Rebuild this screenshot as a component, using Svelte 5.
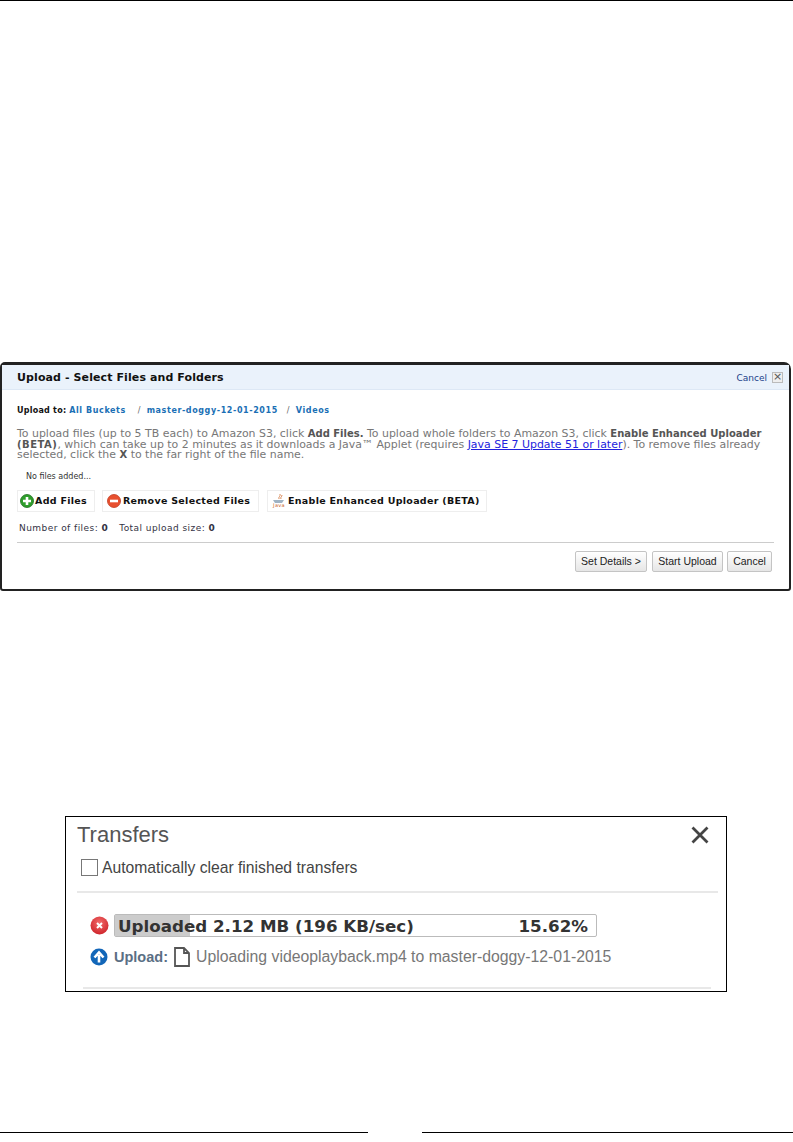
<script>
	const crumbs = ['master-doggy-12-01-2015', 'Videos'];
</script>

<div class="page">
	<div class="top-rule"></div>

	<section class="upload">
		<header class="upload__head">
			<h2>Upload - Select Files and Folders</h2>
			<span class="upload__cancel">Cancel</span>
			<span class="upload__x">×</span>
		</header>

		<div class="upload__body">
			<p class="crumbs">
				<b>Upload to:</b> <a href="#a">All Buckets</a>
				{#each crumbs as c}
					<span class="sep">/</span><a href="#a">{c}</a>
				{/each}
			</p>

			<p class="intro">
				To upload files (up to 5 TB each) to Amazon S3, click <b>Add Files.</b> To upload whole folders to Amazon S3, click <b>Enable Enhanced Uploader</b><br />
				<b class="beta">(BETA)</b>, which can take up to 2 minutes as it downloads a Java™ Applet (requires <a class="java" href="#a">Java SE 7 Update 51 or later</a>). To remove files already<br />
				selected, click the <b>X</b> to the far right of the file name.
			</p>

			<p class="none">No files added...</p>

			<div class="tools">
				<span class="tool tool--add">
					<svg width="14" height="14" viewBox="0 0 14 14">
						<circle cx="7" cy="7" r="6.5" fill="#2f9e2c" stroke="#1c6e1c" stroke-width="0.8" />
						<path d="M7 3v8M3 7h8" stroke="#fff" stroke-width="2.6" />
					</svg>
					Add Files
				</span>
				<span class="tool tool--remove">
					<svg width="14" height="14" viewBox="0 0 14 14">
						<circle cx="7" cy="7" r="6.5" fill="#e8502f" stroke="#c23a1f" stroke-width="0.8" />
						<path d="M3 7h8" stroke="#fff" stroke-width="2.6" />
					</svg>
					Remove Selected Files
				</span>
				<span class="tool tool--java">
					<span class="java-logo">
						<svg width="14" height="10" viewBox="0 0 14 10">
							<path d="M8 0c1 2-2 3-1 5M10 1c0 2-2 2-1 4" stroke="#d98a5a" fill="none" />
							<path d="M1 6h11l-2 3H3z" fill="#9fb3c4" />
						</svg>
						<span class="java-word">Java</span>
					</span>
					Enable Enhanced Uploader (BETA)
				</span>
			</div>

			<p class="counts">
				<span>Number of files: <b>0</b></span>
				<span>Total upload size: <b>0</b></span>
			</p>

			<div class="upload__foot">
				<button>Set Details &gt;</button>
				<button>Start Upload</button>
				<button>Cancel</button>
			</div>
		</div>
	</section>

	<section class="transfers">
		<header class="transfers__head">
			<h2>Transfers</h2>
			<svg width="18" height="18" viewBox="0 0 18 18">
				<path d="M1.5 1.5l15 15M16.5 1.5l-15 15" stroke="#444" stroke-width="2.8" />
			</svg>
		</header>

		<div class="auto">
			<span class="check"></span>
			Automatically clear finished transfers
		</div>

		<div class="transfers__row">
			<svg width="19" height="19" viewBox="0 0 19 19">
				<defs>
					<radialGradient id="red" cx="50%" cy="35%" r="70%">
						<stop offset="0" stop-color="#f26a6a" />
						<stop offset="1" stop-color="#cc2027" />
					</radialGradient>
				</defs>
				<circle cx="9.5" cy="9.5" r="9" fill="url(#red)" />
				<path d="M7 7l5 5M12 7l-5 5" stroke="#fff" stroke-width="2" />
			</svg>
			<div class="bar">
				<div class="bar__fill" style="width: {15.62}%"></div>
				<span class="bar__text">Uploaded 2.12 MB (196 KB/sec)</span>
				<span class="bar__pct">15.62%</span>
			</div>
		</div>

		<div class="transfers__file">
			<svg width="18" height="18" viewBox="0 0 18 18">
				<circle cx="9" cy="9" r="8.5" fill="#1266b8" />
				<path d="M9 14.5V7M4.5 9.5L9 4.5l4.5 5" stroke="#fff" stroke-width="2.6" fill="none" />
			</svg>
			<b>Upload:</b>
			<svg class="doc" width="16" height="20" viewBox="0 0 16 20">
				<path d="M1 1h9l5 5v13H1zM10 1v5h5" fill="#fff" stroke="#555" stroke-width="1.8" />
			</svg>
			<span>Uploading videoplayback.mp4 to master-doggy-12-01-2015</span>
		</div>

		<div class="transfers__end"></div>
	</section>

	<div class="bottom-rule">
		<span></span>
		<span></span>
	</div>
</div>

<style>
	:global(body) {
		margin: 0;
		background: #fff;
	}

	.page {
		height: 1142px;
		overflow: hidden;
		font-family: 'DejaVu Sans', sans-serif;
	}

	p,
	h2 {
		margin: 0;
	}

	.top-rule {
		height: 1px;
		background: #000;
	}

	/* captura de S3 */
	.upload {
		box-sizing: border-box;
		width: 791px;
		height: 229px;
		margin-top: 361px;
		border: solid #222;
		border-width: 3px 2px 2px 2px;
		border-radius: 5px 7px 3px 3px;
		background: #fff;
	}

	.upload__head {
		box-sizing: border-box;
		display: flex;
		align-items: center;
		height: 25px;
		padding: 1px 6px 0 15px;
		background: #eaf2fb;
		border-bottom: 1px solid #dde8f5;
	}

	.upload__head h2 {
		flex: 1;
		font-size: 11px;
		font-weight: 700;
		letter-spacing: 0.1px;
		color: #111;
	}

	.upload__cancel {
		font-size: 9px;
		color: #1b3f8a;
		margin-right: 5px;
	}

	.upload__x {
		box-sizing: border-box;
		width: 11px;
		height: 11px;
		line-height: 8px;
		font-size: 11px;
		text-align: center;
		color: #555;
		background: #eee;
		border: 1px solid #bbb;
	}

	.upload__body {
		padding: 0 15px;
	}

	.crumbs {
		margin-top: 15px;
		font-size: 8px;
		line-height: 11px;
		letter-spacing: 0.25px;
		color: #111;
	}

	.crumbs a {
		color: #1a6fb5;
		font-weight: 700;
		letter-spacing: 0.6px;
		text-decoration: none;
	}

	.sep {
		margin: 0 6px 0 9px;
		color: #666;
	}

	.intro {
		margin-top: 13px;
		font-size: 10.95px;
		line-height: 10.5px;
		color: #777;
		white-space: nowrap;
	}

	.intro b {
		font-size: 10px;
		color: #555;
	}

	.intro .beta {
		letter-spacing: 0.5px;
	}

	.java {
		color: #2222dd;
	}

	.none {
		margin: 10px 0 0 9px;
		font-size: 8px;
		line-height: 11px;
		color: #333;
	}

	.tools {
		display: flex;
		gap: 7px;
		margin-top: 8px;
	}

	.tool {
		box-sizing: border-box;
		display: flex;
		align-items: center;
		gap: 2px;
		height: 22px;
		padding: 0 2px;
		border: 1px solid #eee;
		font-size: 9.5px;
		font-weight: 700;
		letter-spacing: 0.3px;
		color: #111;
		white-space: nowrap;
	}

	.tool--add {
		width: 78px;
		gap: 1px;
	}

	.tool--remove {
		width: 157px;
		padding-left: 4px;
	}

	.tool--java {
		width: 220px;
		margin-left: 1px;
		padding-left: 4px;
	}

	.java-logo {
		display: flex;
		flex-direction: column;
		align-items: center;
		width: 14px;
	}

	.java-word {
		font-size: 5px;
		line-height: 5px;
		font-weight: 400;
		color: #c8632b;
		margin-top: -1px;
	}

	.counts {
		display: flex;
		gap: 11px;
		margin: 11px 0 0 2px;
		font-size: 9px;
		line-height: 11px;
		letter-spacing: 0.45px;
		color: #334;
	}

	.upload__foot {
		display: flex;
		justify-content: flex-end;
		gap: 4px;
		margin-top: 8px;
		padding: 8px 2px 0 0;
		border-top: 1px solid #ccc;
	}

	button {
		height: 21px;
		padding: 0;
		border: 1px solid #c4c4c4;
		border-radius: 2px;
		background: linear-gradient(#fff, #e6e6e6);
		font-family: 'Liberation Sans', sans-serif;
		font-size: 10.5px;
		color: #222;
	}

	button:nth-child(1) {
		width: 72px;
		margin-right: 1px;
	}

	button:nth-child(2) {
		width: 71px;
	}

	button:nth-child(3) {
		width: 45px;
	}

	/* captura de transferencias */
	.transfers {
		box-sizing: border-box;
		width: 662px;
		height: 176px;
		margin: 225px 0 0 65px;
		padding: 0 8px 0 11px;
		border: 1px solid #000;
		font-family: 'Liberation Sans', sans-serif;
	}

	.transfers__head {
		display: flex;
		justify-content: space-between;
		align-items: center;
		height: 34px;
		padding: 1px 9px 0 0;
	}

	.transfers__head h2 {
		font-size: 22px;
		font-weight: 400;
		color: #555;
	}

	.auto {
		display: flex;
		align-items: center;
		gap: 4px;
		height: 41px;
		padding: 0 0 8px 4px;
		box-sizing: border-box;
		border-bottom: 2px solid #e8e8e8;
		font-size: 15.7px;
		color: #444;
	}

	.check {
		box-sizing: border-box;
		width: 17px;
		height: 17px;
		border: 1px solid #777;
		background: #fff;
	}

	.transfers__row {
		display: flex;
		align-items: center;
		gap: 5px;
		margin: 21px 0 0 13px;
	}

	.bar {
		position: relative;
		box-sizing: border-box;
		display: flex;
		justify-content: space-between;
		align-items: center;
		width: 483px;
		height: 23px;
		padding: 0 8px 0 3px;
		border: 1px solid #bbb;
		border-radius: 2px;
		font-family: 'DejaVu Sans', sans-serif;
		font-size: 16.7px;
		font-weight: 700;
		color: #333;
	}

	.bar__fill {
		position: absolute;
		left: 0;
		top: 0;
		bottom: 0;
		background: #ccc;
	}

	.bar__text,
	.bar__pct {
		position: relative;
	}

	.transfers__file {
		display: flex;
		align-items: center;
		height: 20px;
		margin: 10px 0 0 13px;
		font-size: 15.8px;
		color: #777;
		white-space: nowrap;
	}

	.transfers__file b {
		margin-left: 6px;
		font-size: 14.5px;
		color: #5b6f84;
	}

	.doc {
		margin: 0 6px;
	}

	.transfers__end {
		height: 2px;
		margin: 20px 7px 0 6px;
		background: #e8e8e8;
	}

	.bottom-rule {
		display: flex;
		justify-content: space-between;
		margin-top: 140px;
	}

	.bottom-rule span {
		height: 1px;
		background: #000;
		width: 368px;
	}

	.bottom-rule span + span {
		width: 371px;
	}
</style>
